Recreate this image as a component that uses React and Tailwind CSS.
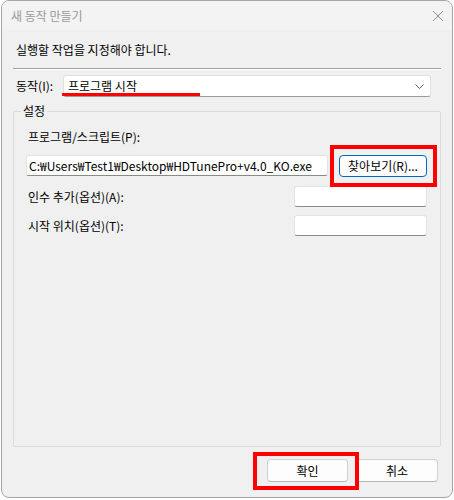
import React from 'react';

const font = { fontFamily: '"Noto Sans CJK KR", "Segoe UI", "Liberation Sans", sans-serif' };

function TextField({ className, value }) {
    return (
        <div className={`bg-white border border-[#e3e3e3] border-b-[#8a8a8a] rounded-[3px] flex items-center px-[2px] text-[12px] text-black overflow-hidden whitespace-nowrap ${className}`}>
            {value}
        </div>
    );
}

export default function App() {
    return (
        <div className="min-h-screen bg-white text-[12px] text-[#1a1a1a]" style={font}>
            <div className="ml-px w-[452px] h-[498px] border border-[#a5a5a5] rounded-lg bg-[#f0f0f0] flex flex-col overflow-hidden">
                {/* Title bar */}
                <div className="h-[29px] shrink-0 flex items-center justify-between pl-[9px] pr-[8px] bg-[#f3f3f3]">
                    <span className="text-[12px] text-[#9a9a9a] leading-none pt-[1px]">새 동작 만들기</span>
                    <svg width="12" height="12" viewBox="0 0 12 12" className="mt-[1px]">
                        <path d="M1 1 L11 11 M11 1 L1 11" stroke="#8f8f8f" strokeWidth="1" fill="none" />
                    </svg>
                </div>

                {/* Body */}
                <div className="flex-1 flex flex-col">
                    <p className="mt-[12px] ml-[14px] leading-[16px] text-black">실행할 작업을 지정해야 합니다.</p>
                    <div className="mt-[10px] ml-[11px] w-[428px] border-t border-[#a0a0a0] border-b border-b-white"></div>

                    {/* Action row */}
                    <div className="mt-[5px] ml-[14px] flex items-center">
                        <span className="w-[47px] text-black">동작(I):</span>
                        <div className="relative w-[368px] h-[22px] bg-white border border-[#e0e0e0] border-b-[#9a9a9a] rounded-[3px] flex items-center justify-between pl-[4px] pr-[6px]">
                            <span className="text-black">프로그램 시작</span>
                            <svg width="9" height="5" viewBox="0 0 9 5">
                                <path d="M0.5 0.5 L4.5 4.5 L8.5 0.5" stroke="#555" strokeWidth="1" fill="none" />
                            </svg>
                            <div className="absolute left-[-2px] top-[17px] w-[138px] h-[3px] bg-[#ff0000]"></div>
                        </div>
                    </div>

                    {/* Settings group */}
                    <div className="relative mt-[14px] ml-[11px] w-[428px] h-[336px] border border-[#dadada] rounded-[2px]">
                        <span className="absolute left-[7px] top-[-9px] px-[2px] bg-[#f0f0f0] leading-[16px] text-black">설정</span>
                        <p className="mt-[17px] ml-[14px] leading-[16px] text-black">프로그램/스크립트(P):</p>
                        <div className="mt-[10px] ml-[12px] flex items-start">
                            <TextField className="w-[302px] h-[21px]" value="C:₩Users₩Test1₩Desktop₩HDTunePro+v4.0_KO.exe" />
                            <div className="relative ml-[11px]">
                                <button className="w-[88px] h-[22px] bg-[#fdfdfd] border border-[#0067c0] rounded-[4px] text-black text-[12px] flex items-center justify-center">
                                    찾아보기(R)...
                                </button>
                                <div className="absolute left-[-9px] top-[-10px] right-[-10px] bottom-[-10px] border-[4px] border-[#ff0000]"></div>
                            </div>
                        </div>
                        <div className="mt-[9px] ml-[14px] flex items-center justify-between pr-[13px]">
                            <span className="text-black">인수 추가(옵션)(A):</span>
                            <TextField className="w-[133px] h-[21px]" value="" />
                        </div>
                        <div className="mt-[8px] ml-[14px] flex items-center justify-between pr-[13px]">
                            <span className="text-black">시작 위치(옵션)(T):</span>
                            <TextField className="w-[133px] h-[21px]" value="" />
                        </div>
                    </div>

                    {/* Buttons */}
                    <div className="mt-auto mb-[15px] mr-[14px] flex justify-end gap-[8px]">
                        <div className="relative">
                            <button className="w-[81px] h-[23px] bg-[#fdfdfd] border border-[#d0d0d0] border-b-[#b5b5b5] rounded-[4px] text-black text-[12px]">
                                확인
                            </button>
                            <div className="absolute left-[-14px] top-[-7px] right-[-11px] bottom-[-8px] border-[4px] border-[#ff0000]"></div>
                        </div>
                        <button className="w-[82px] h-[23px] bg-[#fdfdfd] border border-[#d0d0d0] border-b-[#b5b5b5] rounded-[4px] text-black text-[12px]">
                            취소
                        </button>
                    </div>
                </div>
            </div>
        </div>
    );
}
